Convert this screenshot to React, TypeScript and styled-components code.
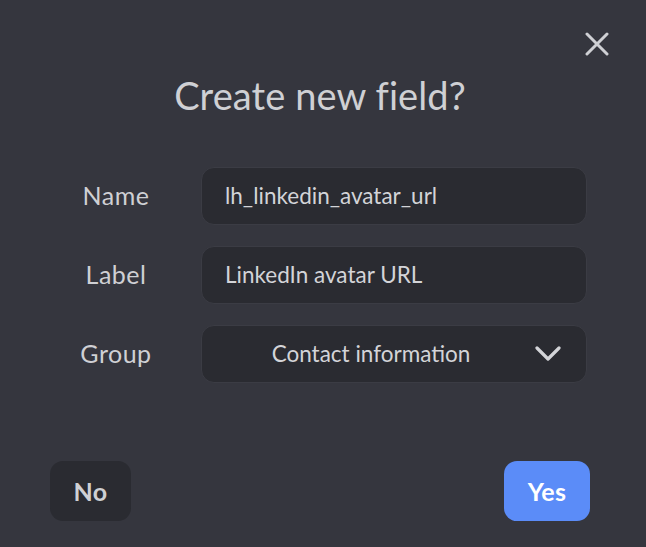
import React from "react";
import styled, { createGlobalStyle } from "styled-components";

const Global = createGlobalStyle`
  html, body { margin: 0; padding: 0; background: #35363e; }
  body { font-family: Lato, "Noto Sans", sans-serif; }
`;

const Dialog = styled.div`
  position: relative;
  width: 646px;
  height: 547px;
  box-sizing: border-box;
  background: #35363e;
  display: flex;
  flex-direction: column;
  padding-top: 70px;
`;

const CloseButton = styled.button`
  position: absolute;
  top: 31px;
  right: 36px;
  width: 26px;
  height: 26px;
  padding: 0;
  border: none;
  background: transparent;
  cursor: pointer;
  display: flex;
  align-items: center;
  justify-content: center;
`;

const Title = styled.h1`
  margin: 0;
  padding-right: 6px;
  text-align: center;
  font-family: Lato, "Noto Sans", sans-serif;
  font-weight: 400;
  font-size: 38px;
  line-height: 50px;
  color: #cfd0d4;
  letter-spacing: 0.1px;
`;

const Form = styled.div`
  display: grid;
  grid-template-columns: 132px 386px;
  column-gap: 19px;
  row-gap: 21px;
  margin: 47px 0 0 50px;
`;

const FieldLabel = styled.label`
  display: flex;
  align-items: center;
  justify-content: center;
  font-size: 25px;
  letter-spacing: 0.5px;
  color: #cfd0d4;
  padding-bottom: 2px;
`;

const Box = styled.div<{ $centered?: boolean }>`
  box-sizing: border-box;
  height: 58px;
  border-radius: 13px;
  background: #2a2b31;
  border: 1px solid #3b3c44;
  display: flex;
  align-items: center;
  padding: ${(p) => (p.$centered ? "0 25px 0 23px" : "0 23px")};
  padding-bottom: 2px;
  font-size: 22.5px;
  color: #d3d4d8;
`;

const BoxText = styled.span<{ $centered?: boolean }>`
  flex: 1;
  text-align: ${(p) => (p.$centered ? "center" : "left")};
  padding-right: ${(p) => (p.$centered ? "18px" : "0")};
`;

const Chevron = styled.svg`
  flex: none;
  width: 26px;
  height: 16px;
  margin-top: 2px;
`;

const Actions = styled.div`
  margin-top: auto;
  display: flex;
  justify-content: space-between;
  padding: 0 56px 26px 50px;
`;

const Button = styled.button<{ $primary?: boolean }>`
  height: 60px;
  padding: 0 20px;
  border: none;
  border-radius: 13px;
  font-family: Lato, "Noto Sans", sans-serif;
  font-weight: 700;
  font-size: 25px;
  letter-spacing: 0.3px;
  background: ${(p) => (p.$primary ? "#5b8cf8" : "#2a2b31")};
  color: ${(p) => (p.$primary ? "#ffffff" : "#cfd0d4")};
  min-width: ${(p) => (p.$primary ? "86px" : "81px")};
  cursor: pointer;
`;

export default function App() {
  return (
    <>
      <Global />
      <Dialog>
        <CloseButton aria-label="Close">
          <svg width="24" height="24" viewBox="0 0 24 24">
            <path d="M2 2 L22 22 M22 2 L2 22" stroke="#cfd0d4" strokeWidth="3" strokeLinecap="round" />
          </svg>
        </CloseButton>
        <Title>Create new field?</Title>
        <Form>
          <FieldLabel>Name</FieldLabel>
          <Box>
            <BoxText>lh_linkedin_avatar_url</BoxText>
          </Box>
          <FieldLabel>Label</FieldLabel>
          <Box>
            <BoxText>LinkedIn avatar URL</BoxText>
          </Box>
          <FieldLabel>Group</FieldLabel>
          <Box $centered>
            <BoxText $centered>Contact information</BoxText>
            <Chevron viewBox="0 0 26 16">
              <path d="M2 2 L13 13 L24 2" fill="none" stroke="#d3d4d8" strokeWidth="3.2" strokeLinecap="round" strokeLinejoin="round" />
            </Chevron>
          </Box>
        </Form>
        <Actions>
          <Button>No</Button>
          <Button $primary>Yes</Button>
        </Actions>
      </Dialog>
    </>
  );
}
